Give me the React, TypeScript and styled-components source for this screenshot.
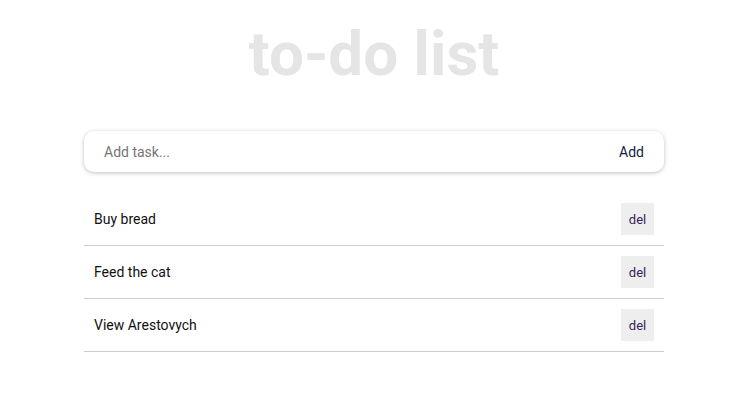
import React, { useState } from 'react'
import styled, { createGlobalStyle } from 'styled-components'

const GlobalStyle = createGlobalStyle`
  body {
    margin: 0;
    background: #fff;
    font-family: Roboto, 'Liberation Sans', sans-serif;
  }
`

const Page = styled.main`
  display: flex;
  flex-direction: column;
  align-items: center;
  padding-right: 6px;
`

const Title = styled.h1`
  margin: 16px 0 40px;
  font-size: 62px;
  line-height: 75px;
  font-weight: 700;
  color: #e5e5e5;
`

const Column = styled.div`
  width: 580px;
  display: flex;
  flex-direction: column;
`

const AddForm = styled.form`
  display: flex;
  align-items: center;
  height: 41px;
  border-radius: 10px;
  box-shadow: 0 1px 4px rgba(0, 0, 0, 0.25);
  margin-bottom: 21px;
`

const TaskInput = styled.input`
  flex: 1;
  border: none;
  outline: none;
  background: transparent;
  padding: 0 20px;
  font-family: inherit;
  font-size: 14px;
  color: #222;

  ::placeholder {
    color: #757575;
  }
`

const AddButton = styled.button`
  border: none;
  background: none;
  padding: 0 20px 0 10px;
  font-family: inherit;
  font-size: 14px;
  color: #0d2340;
  cursor: pointer;
`

const List = styled.ul`
  list-style: none;
  margin: 0;
  padding: 0;
`

const Item = styled.li`
  display: flex;
  align-items: center;
  justify-content: space-between;
  padding: 10px 10px;
  border-bottom: 1px solid #ccc;
  font-size: 14px;
  color: #111;
`

const DelButton = styled.button`
  width: 33px;
  height: 32px;
  border: none;
  background: #eeeeee;
  font-family: inherit;
  font-size: 13px;
  color: #3a1f5a;
  padding: 0;
  cursor: pointer;
`

export default function App() {
  const [tasks, setTasks] = useState(['Buy bread', 'Feed the cat', 'View Arestovych'])
  const [text, setText] = useState('')

  const add = (e: React.FormEvent) => {
    e.preventDefault()
    if (!text.trim()) return
    setTasks([...tasks, text.trim()])
    setText('')
  }

  return (
    <Page>
      <GlobalStyle />
      <Title>to-do list</Title>
      <Column>
        <AddForm onSubmit={add}>
          <TaskInput
            placeholder="Add task..."
            value={text}
            onChange={(e) => setText(e.target.value)}
          />
          <AddButton type="submit">Add</AddButton>
        </AddForm>
        <List>
          {tasks.map((t, i) => (
            <Item key={i}>
              {t}
              <DelButton onClick={() => setTasks(tasks.filter((_, j) => j !== i))}>
                del
              </DelButton>
            </Item>
          ))}
        </List>
      </Column>
    </Page>
  )
}
